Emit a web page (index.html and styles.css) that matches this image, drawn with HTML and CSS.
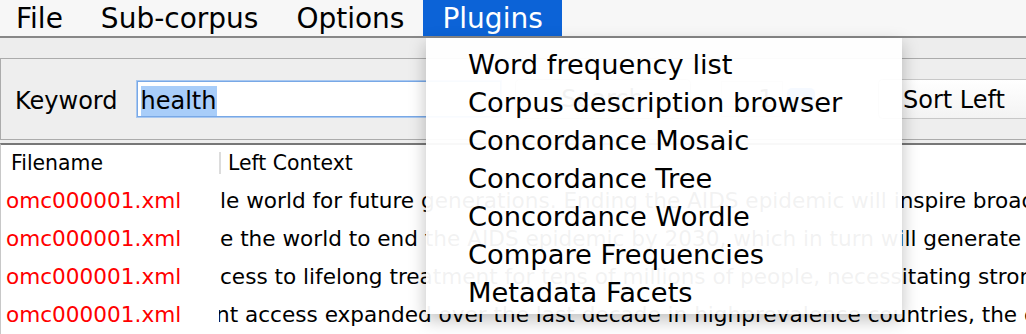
FILE: index.html
```html
<!DOCTYPE html>
<html lang="en">
<head>
  <meta charset="UTF-8" />
  <title>Concordance</title>
  <link rel="stylesheet" href="styles.css">
</head>

<body>

  <div class="menubar">
    <span class="menu-item first">File</span>
    <span class="menu-item">Sub-corpus</span>
    <span class="menu-item">Options</span>
    <span class="menu-item active">Plugins</span>
  </div>

  <div class="search-panel">
    <label class="kw-label" for="keyword">Keyword</label>
    <div class="kw-field" id="keyword"><span class="sel">health</span></div>
    <div class="btn search-btn">Search</div>
    <div class="spinner">
      <span class="spin-value">1</span>
      <span class="spin-arrows">
        <svg width="14" height="10" viewBox="0 0 14 10"><path d="M2 8 L7 3 L12 8" fill="none" stroke="#fff" stroke-width="2"/></svg>
      </span>
    </div>
    <div class="btn sort-btn">Sort Left</div>
  </div>

  <div class="table">
    <div class="thead">
      <div class="th th-file">Filename</div>
      <div class="th th-left">Left Context</div>
    </div>
    <div class="row">
      <div class="cell file">omc000001.xml</div>
      <div class="cell ctx"><span>le world for future generations. Ending the AIDS epidemic will inspire broad</span></div>
    </div>
    <div class="row">
      <div class="cell file">omc000001.xml</div>
      <div class="cell ctx"><span>e the world to end the AIDS epidemic by 2030, which in turn will generate</span></div>
    </div>
    <div class="row">
      <div class="cell file">omc000001.xml</div>
      <div class="cell ctx"><span>cess to lifelong treatment for tens of millions of people, necessitating strong</span></div>
    </div>
    <div class="row">
      <div class="cell file">omc000001.xml</div>
      <div class="cell ctx"><span class="clip">nt access expanded over the last decade in highprevalence countries, the dem</span></div>
    </div>
  </div>

  <!-- Plugins-Menü (offen) -->
  <div class="dropdown">
    <div class="dd-item">Word frequency list</div>
    <div class="dd-item">Corpus description browser</div>
    <div class="dd-item">Concordance Mosaic</div>
    <div class="dd-item">Concordance Tree</div>
    <div class="dd-item">Concordance Wordle</div>
    <div class="dd-item">Compare Frequencies</div>
    <div class="dd-item">Metadata Facets</div>
  </div>

</body>
</html>
```

FILE: styles.css
```css
body {
  margin: 0;
  font-family: "DejaVu Sans", Verdana, sans-serif;
  background: #ededed;
  color: #000;
  overflow: hidden;
}

.menubar {
  display: flex;
  height: 36px;
  background: #f7f7f7;
  border-bottom: 2px solid #888;
  font-size: 28px;
}

.menu-item {
  display: flex;
  align-items: center;
  padding: 0 19px;
  white-space: nowrap;
}

.menu-item.first {
  padding-left: 16px;
}

.menu-item.active {
  background: #0c63d7;
  color: #fff;
}

.search-panel {
  display: flex;
  align-items: center;
  height: 80px;
  margin-top: 20px;
  border: 1px solid #ababab;
  border-right: none;
  background: #eeeeee;
  font-size: 24px;
}

.kw-label {
  margin-left: 14px;
  margin-right: 19px;
  padding-top: 3px;
}

.kw-field {
  display: flex;
  align-items: center;
  width: 364px;
  height: 36px;
  padding-left: 3px;
  padding-top: 3px;
  box-sizing: border-box;
  background: #fff;
  border: 1px solid #78a8e6;
  box-shadow: 0 0 0 1px #a9c8f0;
}

.sel {
  background: #a8cdf9;
  line-height: 30px;
}

.btn {
  display: flex;
  align-items: center;
  justify-content: center;
  height: 40px;
  background: linear-gradient(#ffffff, #f3f3f3);
  border: 1px solid #c8c8c8;
  border-radius: 5px;
  box-sizing: border-box;
}

.search-btn {
  width: 176px;
  margin-left: 14px;
}

.spinner {
  display: flex;
  align-items: center;
  margin-left: 30px;
  height: 36px;
}

.spin-value {
  display: flex;
  align-items: center;
  justify-content: flex-end;
  width: 62px;
  height: 36px;
  padding-right: 8px;
  box-sizing: border-box;
  background: #fff;
  border: 1px solid #cfcfcf;
}

.spin-arrows {
  display: flex;
  align-items: center;
  justify-content: center;
  width: 28px;
  height: 22px;
  margin-left: 4px;
  background: #3d8ef0;
  border-radius: 5px;
}

.sort-btn {
  margin-left: auto;
  width: 148px;
  justify-content: flex-start;
  padding-left: 24px;
  padding-top: 2px;
  border-right: none;
  border-radius: 5px 0 0 5px;
}

.table {
  margin-top: 3px;
  border-top: 2px solid #777;
  border-left: 1px solid #c8c8c8;
  background: #fff;
  font-size: 21.6px;
  height: 200px;
}

.thead {
  display: grid;
  grid-template-columns: 218px 1fr;
  height: 36px;
  align-items: center;
  font-size: 20.4px;
}

.th-file {
  padding-left: 10px;
}

.th-left {
  padding-left: 7px;
  border-left: 2px solid #dcdcdc;
  line-height: 22px;
}

.row {
  display: grid;
  grid-template-columns: 218px 1fr;
  height: 38px;
  align-items: center;
}

.cell.file {
  padding-left: 5px;
  color: #ff0000;
}

.cell.ctx {
  overflow: hidden;
  white-space: nowrap;
  padding-left: 1px;
}

.clip {
  display: inline-block;
  margin-left: -4px;
}

.dropdown {
  position: absolute;
  left: 426px;
  top: 38px;
  width: 476px;
  height: 268px;
  padding-top: 8px;
  background: rgba(255, 255, 255, 0.95);
  box-shadow: 0 6px 16px rgba(0, 0, 0, 0.25);
  font-size: 27.3px;
}

.dd-item {
  height: 38px;
  line-height: 38px;
  padding-left: 42px;
  white-space: nowrap;
}
```
